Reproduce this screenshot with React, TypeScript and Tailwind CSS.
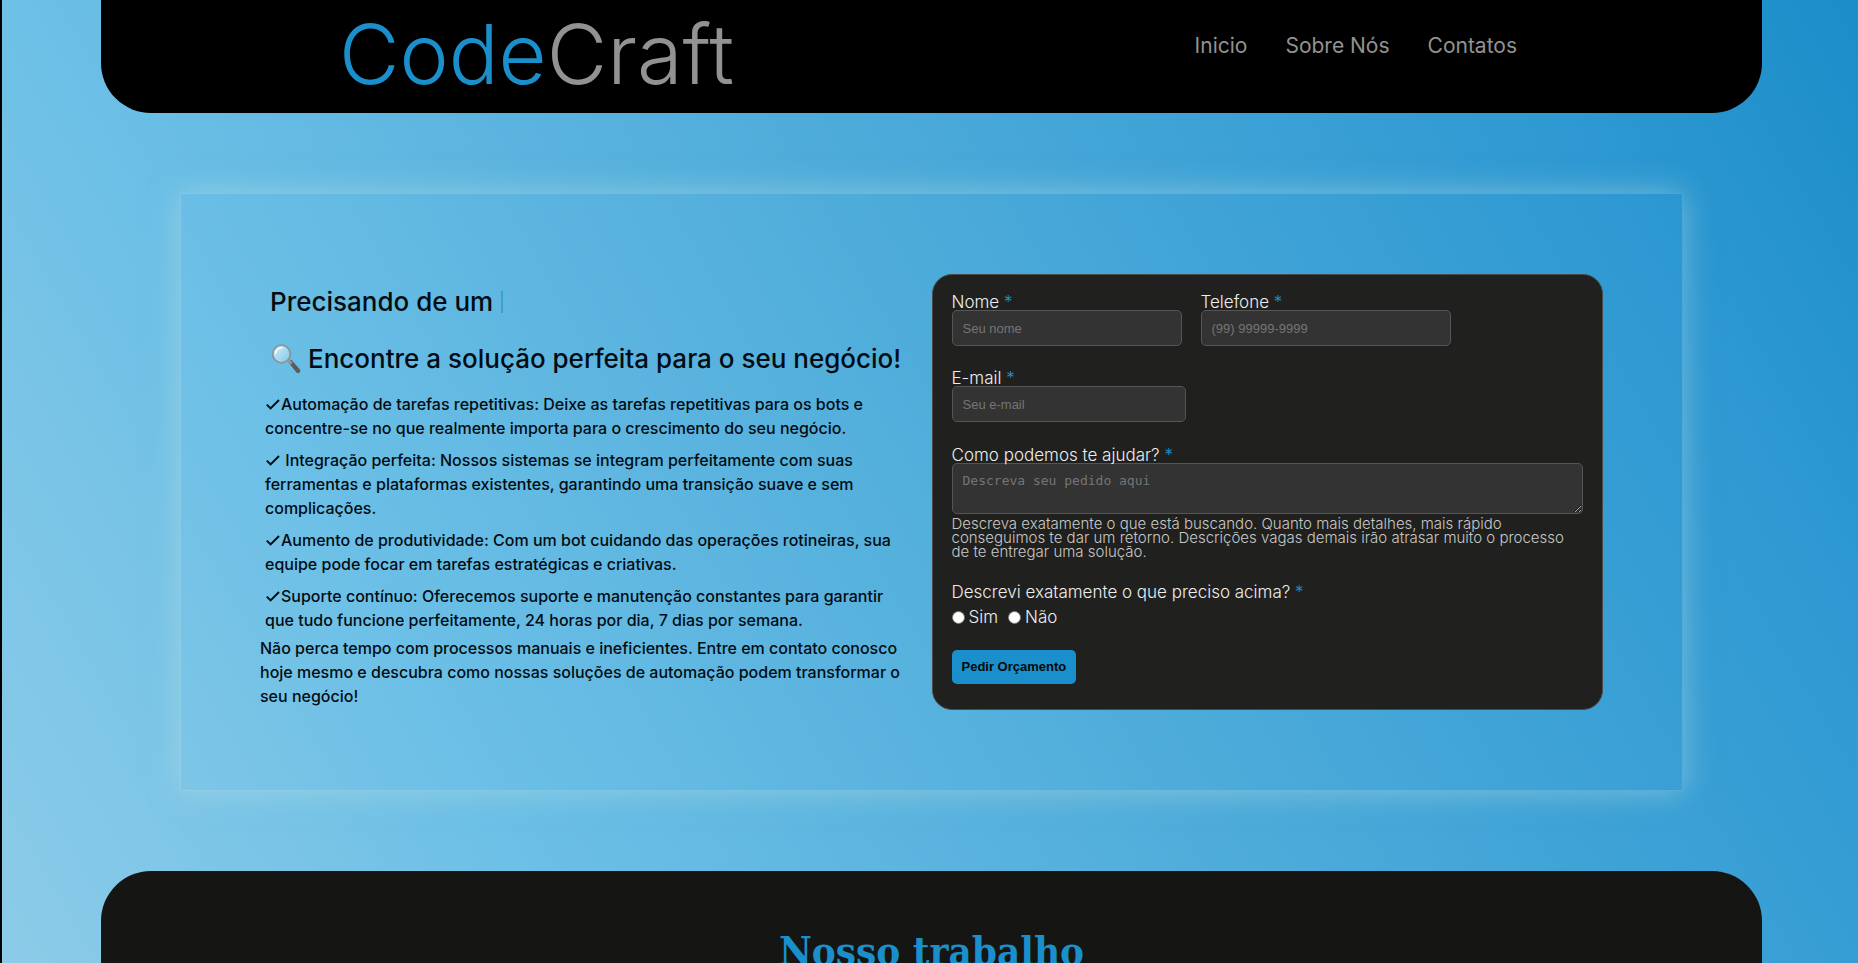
import type { ReactNode } from "react";

const navLinks = [
  { label: "Inicio", href: "#inicio" },
  { label: "Sobre Nós", href: "#sobre" },
  { label: "Contatos", href: "#contatos" },
];

const benefits = [
  "Automação de tarefas repetitivas: Deixe as tarefas repetitivas para os bots e concentre-se no que realmente importa para o crescimento do seu negócio.",
  " Integração perfeita: Nossos sistemas se integram perfeitamente com suas ferramentas e plataformas existentes, garantindo uma transição suave e sem complicações.",
  "Aumento de produtividade: Com um bot cuidando das operações rotineiras, sua equipe pode focar em tarefas estratégicas e criativas.",
  "Suporte contínuo: Oferecemos suporte e manutenção constantes para garantir que tudo funcione perfeitamente, 24 horas por dia, 7 dias por semana.",
];

const fieldClass =
  "block h-9 rounded-[5px] border border-[#555] bg-[#333] px-2.5 font-['Liberation_Sans',sans-serif] text-[13px] text-white placeholder:text-[#757575]";

function CheckIcon() {
  return (
    <svg viewBox="0 0 16 16" className="inline-block size-4 align-[-2px]" aria-hidden="true">
      <path d="M1.8 8.6 5.6 12.4 14 4" fill="none" stroke="currentColor" strokeWidth="2" />
    </svg>
  );
}

function MagnifierIcon() {
  return (
    <svg viewBox="0 0 32 32" className="size-8 shrink-0" aria-hidden="true">
      <defs>
        <linearGradient id="lens" x1="0" y1="0" x2="1" y2="1">
          <stop offset="0" stopColor="#d5f0fa" />
          <stop offset="1" stopColor="#7cc7e8" />
        </linearGradient>
      </defs>
      <path d="M18 19 21 16.500 30 26.500Q31 29 28.500 30 27.500 30.500 26.500 29.500Z" fill="#5d5b5c" />
      <path d="m17.500 18.500 2-2 3 3.200-2 2z" fill="#9a9a9a" />
      <circle cx="11.500" cy="11" r="8.800" fill="url(#lens)" stroke="#8d9499" strokeWidth="1.800" />
      <path d="M5.500 10.500A6.500 6.500 0 0 1 12 4.800" fill="none" stroke="#fff" strokeWidth="1.600" strokeLinecap="round" />
    </svg>
  );
}

function Label({ htmlFor, children }: { htmlFor: string; children: ReactNode }) {
  return (
    <label htmlFor={htmlFor} className="block pt-1 leading-4">
      {children} <span className="text-[#1a8fcb]">*</span>
    </label>
  );
}

function QuoteForm() {
  return (
    <form
      className="flex flex-col rounded-[20px] border border-[#4a4a48] bg-[#20211f] px-[19px] pt-[15px] pb-[25px] font-light text-[17px] text-[#eee]"
      onSubmit={(e) => e.preventDefault()}
    >
      <div className="flex gap-[19px]">
        <div>
          <Label htmlFor="nome">Nome</Label>
          <input id="nome" type="text" placeholder="Seu nome" className={`${fieldClass} w-[230px]`} />
        </div>
        <div>
          <Label htmlFor="telefone">Telefone</Label>
          <input id="telefone" type="tel" placeholder="(99) 99999-9999" className={`${fieldClass} w-[250px]`} />
        </div>
      </div>
      <div className="mt-5">
        <Label htmlFor="email">E-mail</Label>
        <input id="email" type="email" placeholder="Seu e-mail" className={`${fieldClass} w-[234px]`} />
      </div>
      <div className="mt-[21px]">
        <Label htmlFor="pedido">Como podemos te ajudar?</Label>
        <textarea
          id="pedido"
          placeholder="Descreva seu pedido aqui"
          className="block h-[51px] w-full resize rounded-[5px] border border-[#555] bg-[#333] px-2.5 py-[9px] font-['DejaVu_Sans_Mono',monospace] text-[13px] leading-4 text-white placeholder:text-[#757575]"
        />
        <p className="mt-[3px] text-[15px] leading-[14px] text-[#c8c8c8]">
          Descreva exatamente o que está buscando. Quanto mais detalhes, mais rápido conseguimos te dar um
          retorno. Descrições vagas demais irão atrasar muito o processo de te entregar uma solução.
        </p>
      </div>
      <fieldset className="mt-[21px]">
        <legend className="leading-6">
          Descrevi exatamente o que preciso acima? <span className="text-[#1a8fcb]">*</span>
        </legend>
        <div className="mt-px flex gap-2.5 leading-6">
          <label className="flex items-center gap-1">
            <input type="radio" name="descrito" className="size-[13px] appearance-none rounded-full border border-[#767676] bg-white checked:border-4 checked:border-[#1a8fcb]" />
            Sim
          </label>
          <label className="flex items-center gap-1">
            <input type="radio" name="descrito" className="size-[13px] appearance-none rounded-full border border-[#767676] bg-white checked:border-4 checked:border-[#1a8fcb]" />
            Não
          </label>
        </div>
      </fieldset>
      <button
        type="submit"
        className="mt-[21px] h-[34px] self-start rounded-[5px] bg-[#1a8fcb] px-2.5 font-['Liberation_Sans',sans-serif] text-[13px] font-bold text-[#080808]"
      >
        Pedir Orçamento
      </button>
    </form>
  );
}

export default function App() {
  return (
    <div className="flex h-screen flex-col overflow-hidden border-l-2 border-black bg-[linear-gradient(60deg,#8ccbe8,#6bbfe6_25%,#52aedb_50%,#2d98d2_86%,#1b8dc8)] font-['Inter',sans-serif]">
      <header className="mr-24 ml-[99px] flex h-[113px] shrink-0 items-start justify-between rounded-b-[50px] bg-black pr-[245px] pl-[238px]">
        <a href="#inicio" className="mt-[9px] text-[83px] leading-[90px] font-light text-[#929290]">
          <span className="text-[#1a8fcb]">Code</span>Craft
        </a>
        <nav className="mt-8 flex gap-[38px] text-[21px] leading-7 text-[#929290]">
          {navLinks.map((link) => (
            <a key={link.label} href={link.href}>
              {link.label}
            </a>
          ))}
        </nav>
      </header>

      <main className="mr-[175px] ml-[178px] mt-20 grid shrink-0 grid-cols-2 border border-white/15 px-[79px] py-20 shadow-[0_0_28px_rgba(190,225,225,0.5)]">
        <div className="text-[16px] font-medium leading-6 text-[#030c12]">
          <h1 className="mt-3 ml-2.5 flex items-center text-[26px] leading-8">
            Precisando de um
            <span className="ml-2 h-[22px] w-0.5 bg-[#3a9fd2]" />
          </h1>
          <h2 className="mt-[25px] ml-2.5 flex items-center gap-1.5 text-[26px] leading-8 whitespace-nowrap">
            <MagnifierIcon />
            Encontre a solução perfeita para o seu negócio!
          </h2>
          <ul className="mt-[17px] mr-5 ml-[5px] flex flex-col gap-2">
            {benefits.map((text) => (
              <li key={text}>
                <CheckIcon />
                {text}
              </li>
            ))}
          </ul>
          <p className="mt-1">
            Não perca tempo com processos manuais e ineficientes. Entre em contato conosco hoje mesmo e
            descubra como nossas soluções de automação podem transformar o seu negócio!
          </p>
        </div>
        <QuoteForm />
      </main>

      <section className="mr-24 ml-[99px] mt-20 shrink-0 rounded-t-[50px] bg-[#151513] pt-[50px] pb-20">
        <h2 className="text-center font-['DejaVu_Serif_Condensed','DejaVu_Serif',serif] text-[40px] leading-[60px] font-bold text-[#1a8fcb]">
          Nosso trabalho
        </h2>
      </section>
    </div>
  );
}
